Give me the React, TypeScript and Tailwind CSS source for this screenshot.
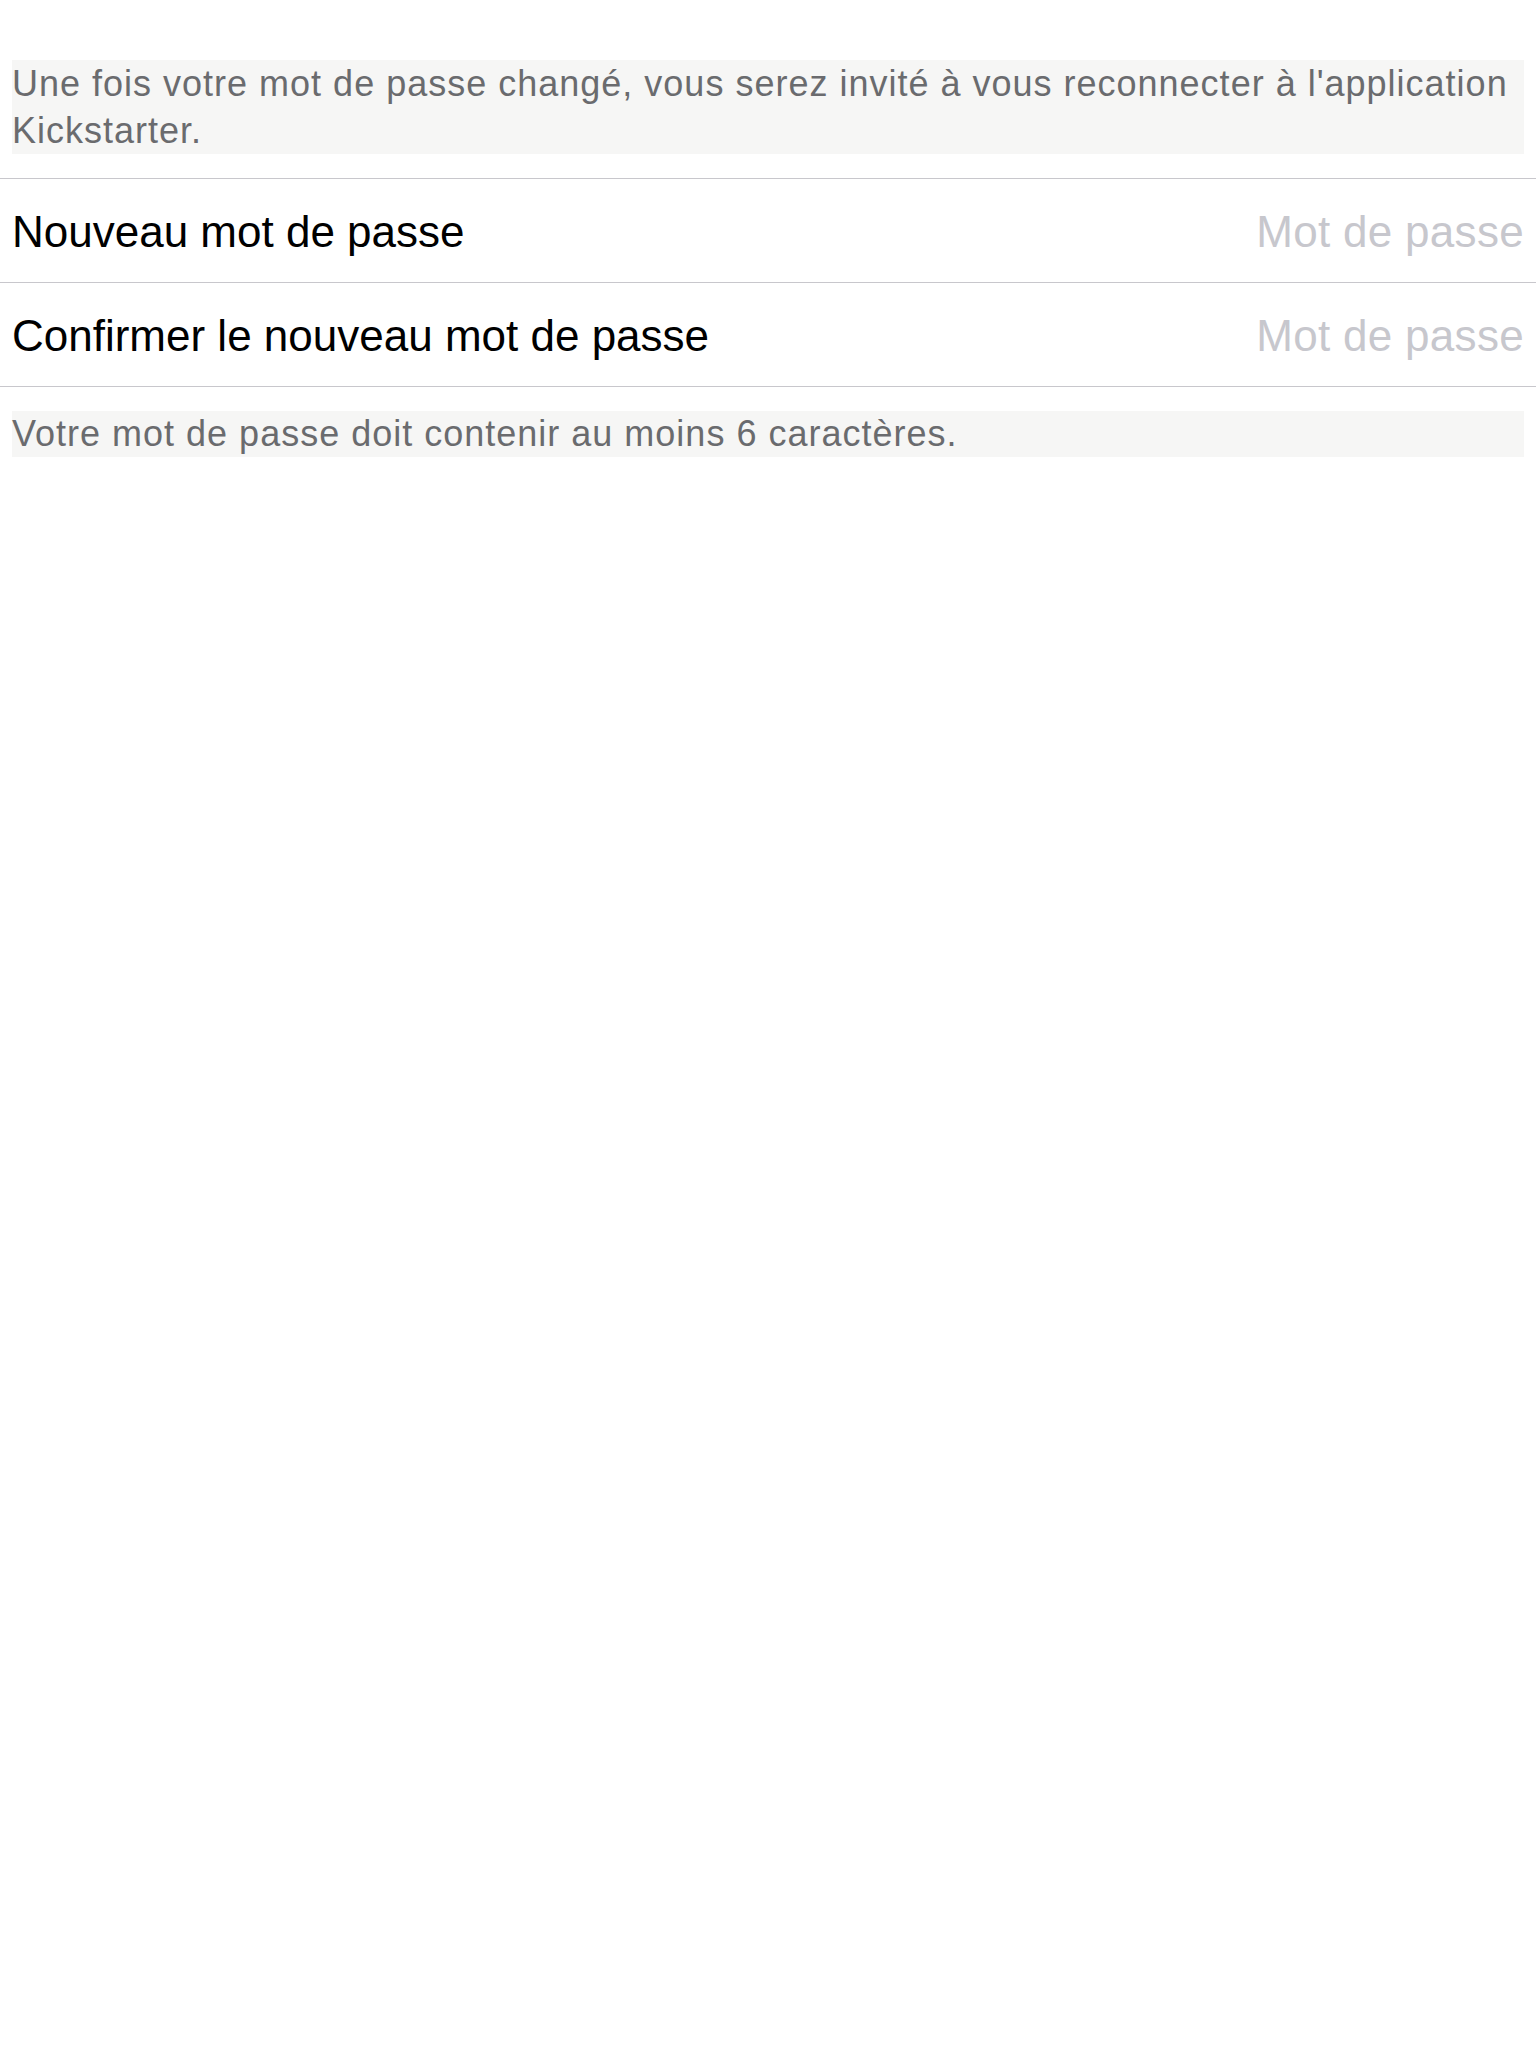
const note =
  "Une fois votre mot de passe changé, vous serez invité à vous reconnecter à l'application Kickstarter.";
const hint = "Votre mot de passe doit contenir au moins 6 caractères.";

function PasswordRow({ label }: { label: string }) {
  return (
    <div className="flex items-center justify-between h-[104px] pl-[12px] pr-[12px] border-b border-[#c8c7cc] pt-[3px]">
      <span className="text-[44px] leading-[50px] text-black">{label}</span>
      <input
        type="password"
        placeholder="Mot de passe"
        className="text-[44px] leading-[50px] text-right w-[420px] outline-none bg-transparent tracking-[0.3px] placeholder:text-[#c7c7cd]"
      />
    </div>
  );
}

function App() {
  return (
    <div className="min-h-screen bg-white font-['Liberation_Sans',Arial,sans-serif]">
      <div className="pt-[60px]">
        <p className="mx-[12px] bg-[#f6f6f5] text-[36px] leading-[47px] tracking-[1px] text-[#6a6b6e]">
          {note}
        </p>
      </div>
      <div className="mt-[24px] border-t border-[#c8c7cc]">
        <PasswordRow label="Nouveau mot de passe" />
        <PasswordRow label="Confirmer le nouveau mot de passe" />
      </div>
      <p className="mx-[12px] mt-[24px] bg-[#f6f6f5] text-[36px] leading-[46px] tracking-[1px] text-[#6a6b6e]">
        {hint}
      </p>
    </div>
  );
}

export default App;
